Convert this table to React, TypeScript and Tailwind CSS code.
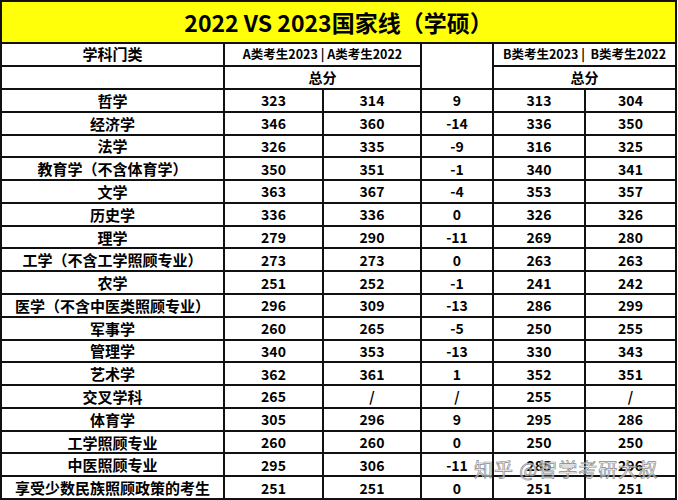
const rows: [string, string, string, string, string, string][] = [
  ['哲学', '323', '314', '9', '313', '304'],
  ['经济学', '346', '360', '-14', '336', '350'],
  ['法学', '326', '335', '-9', '316', '325'],
  ['教育学（不含体育学）', '350', '351', '-1', '340', '341'],
  ['文学', '363', '367', '-4', '353', '357'],
  ['历史学', '336', '336', '0', '326', '326'],
  ['理学', '279', '290', '-11', '269', '280'],
  ['工学（不含工学照顾专业）', '273', '273', '0', '263', '263'],
  ['农学', '251', '252', '-1', '241', '242'],
  ['医学（不含中医类照顾专业）', '296', '309', '-13', '286', '299'],
  ['军事学', '260', '265', '-5', '250', '255'],
  ['管理学', '340', '353', '-13', '330', '343'],
  ['艺术学', '362', '361', '1', '352', '351'],
  ['交叉学科', '265', '/', '/', '255', '/'],
  ['体育学', '305', '296', '9', '295', '286'],
  ['工学照顾专业', '260', '260', '0', '250', '250'],
  ['中医照顾专业', '295', '306', '-11', '285', '296'],
  ['享受少数民族照顾政策的考生', '251', '251', '0', '251', '251'],
]

const cell = 'flex items-center justify-center bg-white'

export default function App() {
  return (
    <div className="relative w-[678px] bg-white font-['Noto_Sans_CJK_SC','Noto_Sans',sans-serif] font-bold text-black">
      <div className="grid h-[500px] w-[677px] grid-cols-[221px_97px_96px_70px_90px_89px] grid-rows-[40px_21px_21px_repeat(18,1fr)] gap-[2px] bg-[#111] p-[2px]">
        {/* Title */}
        <div className="col-span-6 flex items-center justify-center bg-[#ffff0a] text-[23px] leading-none">
          2022 VS 2023国家线（学硕）
        </div>

        {/* Header */}
        <div className={`${cell} text-[15px]`}>学科门类</div>
        <div className={`${cell} col-span-2 text-[12.5px]`}>A类考生2023 | A类考生2022</div>
        <div className={`${cell} row-span-2`} />
        <div className={`${cell} col-span-2 text-[12.5px]`}>B类考生2023 |&nbsp; B类考生2022</div>
        <div className={cell} />
        <div className={`${cell} col-span-2 text-[14px]`}>总分</div>
        <div className={`${cell} col-span-2 text-[14px]`}>总分</div>

        {/* Data */}
        {rows.map((r) => (
          <div key={r[0]} className="contents">
            <div className={`${cell} text-[15px] leading-none`}>{r[0]}</div>
            {r.slice(1).map((v, i) => (
              <div key={i} className={`${cell} text-[14px] leading-none`}>
                {v}
              </div>
            ))}
          </div>
        ))}
      </div>

      {/* Watermark */}
      <span className="pointer-events-none absolute left-[474px] top-[459px] text-[19px] font-normal leading-none tracking-[1px] text-white/60 [-webkit-text-stroke:0.7px_#8a8a8a]">
        知乎 @智学考研大叔
      </span>
    </div>
  )
}
